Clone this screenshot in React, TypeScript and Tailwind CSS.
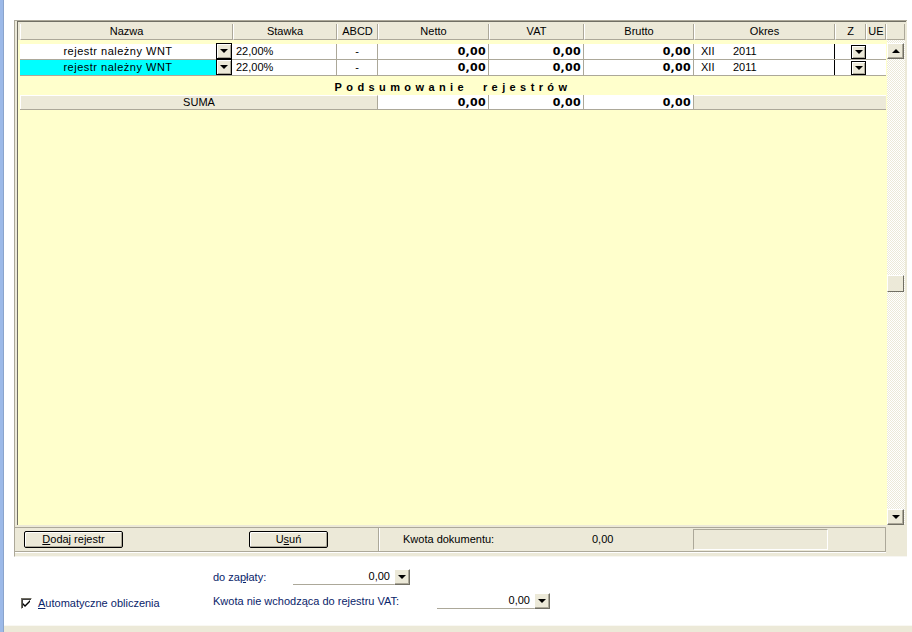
import React from 'react';

// Column widths (include the 1px right border of each cell)
const COLS = [213, 104, 41, 111, 95, 110, 141, 31, 20];
const HEADERS = ['Nazwa', 'Stawka', 'ABCD', 'Netto', 'VAT', 'Brutto', 'Okres', 'Z', 'UE'];

function Arrow({ up = false }: { up?: boolean }) {
  return up ? (
    <div className="w-0 h-0 border-x-[4px] border-x-transparent border-b-[4px] border-b-black" />
  ) : (
    <div className="w-0 h-0 border-x-[4px] border-x-transparent border-t-[4px] border-t-black" />
  );
}

// Small raised button with arrow (scrollbar / combo)
function RaisedBtn({ up = false, className = '' }: { up?: boolean; className?: string }) {
  return (
    <div
      className={`flex items-center justify-center bg-[#ece9d8] border border-t-white border-l-white border-r-[#716f64] border-b-[#716f64] shadow-[inset_-1px_-1px_0_#aca899] ${className}`}
    >
      <Arrow up={up} />
    </div>
  );
}

// Combo arrow inside a grid row, framed black
function CellCombo({ className = '' }: { className?: string }) {
  return (
    <div className={`flex items-center justify-center bg-[#ece9d8] border border-black shadow-[inset_1px_1px_0_#fff,inset_-1px_-1px_0_#aca899] ${className}`}>
      <Arrow />
    </div>
  );
}

const num = "flex items-center justify-end pr-[2px] border-r border-[#aca899] font-['DejaVu_Sans',sans-serif] font-bold tracking-[0.3px]";

function DataRow({ highlight }: { highlight?: boolean }) {
  return (
    <div className="flex h-[16px] border-b border-[#aca899] bg-white">
      {/* Nazwa */}
      <div className="flex" style={{ width: COLS[0] }}>
        <div className={`w-[196px] flex items-center justify-center tracking-[0.5px] ${highlight ? 'bg-[#00ffff]' : 'bg-white'}`}>
          rejestr należny WNT
        </div>
        <CellCombo className="w-[16px] h-[16px] -mt-px" />
        <div className="w-px" />
      </div>
      <div className="flex items-center pl-[3px] border-r border-[#aca899]" style={{ width: COLS[1] }}>
        22,00%
      </div>
      <div className="flex items-center justify-center border-r border-[#aca899]" style={{ width: COLS[2] }}>
        -
      </div>
      <div className={num} style={{ width: COLS[3] }}>0,00</div>
      <div className={num} style={{ width: COLS[4] }}>0,00</div>
      <div className={num} style={{ width: COLS[5] }}>0,00</div>
      <div className="flex items-center pl-[7px] border-r border-black" style={{ width: COLS[6] }}>
        <span className="w-[32px]">XII</span>
        <span>2011</span>
      </div>
      <div className="flex items-start justify-end" style={{ width: COLS[7] }}>
        <CellCombo className="w-[15px] h-[14px] mt-px" />
      </div>
      <div style={{ width: COLS[8] }} />
    </div>
  );
}

export default function App() {
  return (
    <div className="w-[912px] h-[632px] bg-white flex overflow-hidden text-[11px] leading-none text-black font-['Liberation_Sans',Arial,sans-serif]">
      {/* Left window edge */}
      <div className="w-[3px] bg-[#9cb9e8]" />
      <div className="w-px bg-[#8aa4cc]" />

      <div className="flex-1 flex flex-col">
        <div className="h-[20px] shrink-0" />

        {/* Main panel */}
        <div className="shrink-0 ml-[10px] w-[893px] h-[537px] bg-[#ece9d8] border-l border-t border-[#aca899] border-r-0 border-b border-b-[#f7f6f1] flex flex-col pl-[2px]">
          {/* Grid box */}
          <div className="w-[889px] h-[504px] border-l border-t border-[#716f64] flex flex-col">
            {/* Header */}
            <div className="flex pl-[2px] pt-[2px] bg-[#ece9d8]">
              {HEADERS.map((h, i) => (
                <div
                  key={h}
                  className="h-[16px] flex items-center justify-center border-l border-white border-r border-r-[#aca899] border-b border-b-[#aca899]"
                  style={{ width: COLS[i] }}
                >
                  {h}
                </div>
              ))}
              <div className="w-[19px] h-[16px] border-l border-white border-r border-r-[#aca899] border-b border-b-[#aca899]" />
            </div>

            {/* Body */}
            <div className="flex flex-1">
              <div className="w-[869px] bg-[#ffffcc] pl-[2px] pt-[4px] flex flex-col">
                <div className="w-[866px]">
                  <DataRow />
                  <DataRow highlight />
                </div>
                <div className="w-[866px] h-[15px] mt-[4px] flex items-center justify-center font-bold tracking-[4.4px] whitespace-pre">
                  Podsumowanie  rejestrów
                </div>
                <div className="w-[866px] h-[15px] flex border-b border-[#aca899]">
                  <div className="w-[358px] flex items-center justify-center bg-[#ece9d8] border-l border-t border-white border-r border-r-[#aca899]">
                    SUMA
                  </div>
                  <div className={`${num} bg-white`} style={{ width: COLS[3] }}>0,00</div>
                  <div className={`${num} bg-white`} style={{ width: COLS[4] }}>0,00</div>
                  <div className={`${num} bg-white`} style={{ width: COLS[5] }}>0,00</div>
                  <div className="flex-1 bg-[#ece9d8] border-t border-white" />
                </div>
              </div>

              {/* Vertical scrollbar */}
              <div className="w-[18px] flex flex-col pt-[3px] bg-[image:repeating-conic-gradient(#ece9d8_0_25%,#ffffff_0_50%)] bg-[length:2px_2px]">
                <RaisedBtn up className="w-[17px] h-[16px]" />
                <div className="h-[216px]" />
                <div className="w-[17px] h-[17px] bg-[#ece9d8] border border-t-white border-l-white border-r-[#716f64] border-b-[#716f64]" />
                <div className="flex-1" />
                <RaisedBtn className="w-[17px] h-[16px]" />
              </div>
            </div>
          </div>

          {/* Footer bar */}
          <div className="-ml-[2px] mt-[2px] w-[871px] h-[25px] flex border-t border-[#aca899] border-r border-r-[#aca899] border-b border-b-[#aca899] shadow-[0_1px_0_#ffffff]">
            <div className="w-[363px] flex items-center">
              <button className="ml-[9px] w-[99px] h-[17px] flex items-center justify-center bg-[#ece9d8] border border-black rounded-[2px] shadow-[inset_1px_1px_0_#fff,inset_-1px_-1px_0_#aca899]">
                <span>
                  <span className="underline">D</span>odaj rejestr
                </span>
              </button>
              <button className="ml-[126px] w-[79px] h-[17px] flex items-center justify-center bg-[#ece9d8] border border-black rounded-[2px] shadow-[inset_1px_1px_0_#fff,inset_-1px_-1px_0_#aca899]">
                <span>
                  U<span className="underline">s</span>uń
                </span>
              </button>
            </div>
            <div className="w-[315px] flex items-center border-l border-[#aca899] shadow-[inset_1px_0_0_#fff]">
              <span className="ml-[24px] w-[189px]">Kwota dokumentu:</span>
              <span>0,00</span>
            </div>
            <div className="w-[135px] my-[1px] border border-t-[#aca899] border-l-[#aca899] border-r-white border-b-white" />
          </div>
        </div>

        {/* Bottom controls */}
        <div className="flex-1 flex flex-col">
          <div className="mt-[12px] h-[16px] flex items-center">
            <span className="ml-[209px] w-[80px] text-[#0a246a]">
              do za<span className="underline">p</span>łaty:
            </span>
            <div className="w-[101px] h-[16px] border-b border-[#aca899] flex items-center justify-end pr-[4px]">
              0,00
            </div>
            <RaisedBtn className="w-[16px] h-[16px]" />
          </div>
          <div className="mt-[8px] h-[16px] flex items-center">
            <div className="ml-[17px] mt-[5px] w-[11px] h-[11px] bg-white border border-t-[#716f64] border-l-[#716f64] border-r-white border-b-white shadow-[inset_1px_1px_0_#404040] flex items-center justify-center">
              <svg width="9" height="9" viewBox="0 0 9 9">
                <path d="M1 4 L3 6 L8 1 L8 3 L3 8 L1 6 Z" fill="#000" />
              </svg>
            </div>
            <span className="ml-[6px] mt-[5px] w-[175px] text-[#0a246a]">
              <span className="underline">A</span>utomatyczne obliczenia
            </span>
            <span className="w-[224px] text-[#0a246a]">Kwota nie wchodząca do rejestru VAT:</span>
            <div className="w-[97px] h-[16px] border-b border-[#aca899] flex items-center justify-end pr-[4px]">
              0,00
            </div>
            <RaisedBtn className="w-[16px] h-[16px]" />
          </div>
        </div>

        {/* Bottom strip */}
        <div className="h-[7px] shrink-0 bg-[#ece9d8] border-t border-[#f9f8f3]" />
      </div>
    </div>
  );
}
